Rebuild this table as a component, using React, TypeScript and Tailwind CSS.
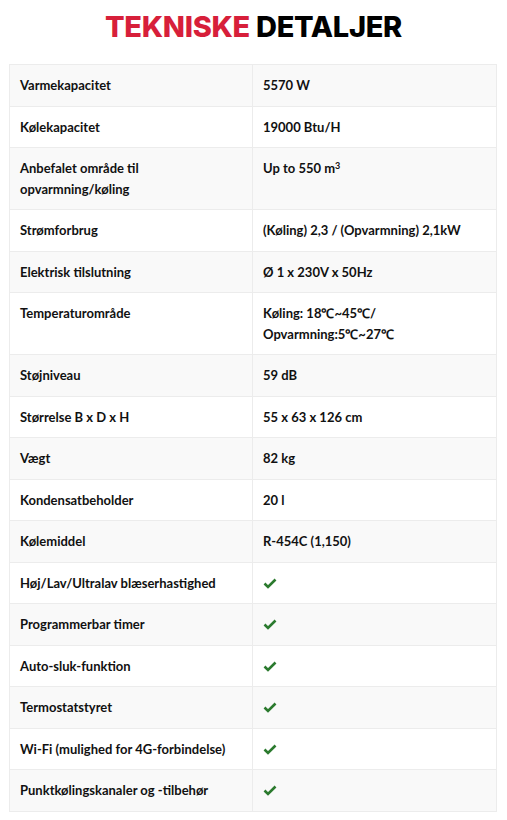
import React from 'react';

type Spec = { label: string; value?: React.ReactNode; check?: boolean };

const specs: Spec[] = [
  { label: 'Varmekapacitet', value: '5570 W' },
  { label: 'Kølekapacitet', value: '19000 Btu/H' },
  {
    label: 'Anbefalet område til opvarmning/køling',
    value: (
      <>
        Up to 550 m<sup className="text-[9px]">3</sup>
      </>
    ),
  },
  { label: 'Strømforbrug', value: '(Køling) 2,3 / (Opvarmning) 2,1kW' },
  { label: 'Elektrisk tilslutning', value: 'Ø 1 x 230V x 50Hz' },
  {
    label: 'Temperaturområde',
    value: (
      <>
        Køling: 18℃~45℃/
        <br />
        Opvarmning:5℃~27℃
      </>
    ),
  },
  { label: 'Støjniveau', value: '59 dB' },
  { label: 'Størrelse B x D x H', value: '55 x 63 x 126 cm' },
  { label: 'Vægt', value: '82 kg' },
  { label: 'Kondensatbeholder', value: '20 l' },
  { label: 'Kølemiddel', value: 'R-454C (1,150)' },
  { label: 'Høj/Lav/Ultralav blæserhastighed', check: true },
  { label: 'Programmerbar timer', check: true },
  { label: 'Auto-sluk-funktion', check: true },
  { label: 'Termostatstyret', check: true },
  { label: 'Wi-Fi (mulighed for 4G-forbindelse)', check: true },
  { label: 'Punktkølingskanaler og -tilbehør', check: true },
];

const Check = () => (
  <svg width="14" height="11" viewBox="0 0 14 11" className="mt-[5px]">
    <path d="M1.5 5.5 L5 9 L12.5 1.5" fill="none" stroke="#2b7a2e" strokeWidth="2.6" />
  </svg>
);

const App: React.FC = () => {
  return (
    <div className="w-[507px] min-h-[820px] bg-white">
      {/* Heading */}
      <h1
        className="text-center text-[29px] font-extrabold leading-none pt-[12px] tracking-[-0.3px]"
        style={{ fontFamily: 'Inter, "Liberation Sans", sans-serif' }}
      >
        <span className="text-[#d71f3a]">TEKNISKE</span> <span className="text-black">DETALJER</span>
      </h1>

      {/* Spec table */}
      <div
        className="mx-[9px] mt-[23px] w-[488px] border border-[#ececec]"
        style={{ fontFamily: 'Lato, "Liberation Sans", sans-serif' }}
      >
        {specs.map((s, i) => (
          <div
            key={i}
            className={`grid grid-cols-[243px_1fr] text-[13px] font-bold leading-[20.5px] text-[#111] ${
              i % 2 === 0 ? 'bg-[#f9f9f9]' : 'bg-white'
            } ${i > 0 ? 'border-t border-[#ececec]' : ''}`}
          >
            <div className="px-[10px] py-[10px] border-r border-[#ececec]">{s.label}</div>
            <div className="px-[10px] py-[10px]">{s.check ? <Check /> : s.value}</div>
          </div>
        ))}
      </div>
    </div>
  );
};

export default App;
